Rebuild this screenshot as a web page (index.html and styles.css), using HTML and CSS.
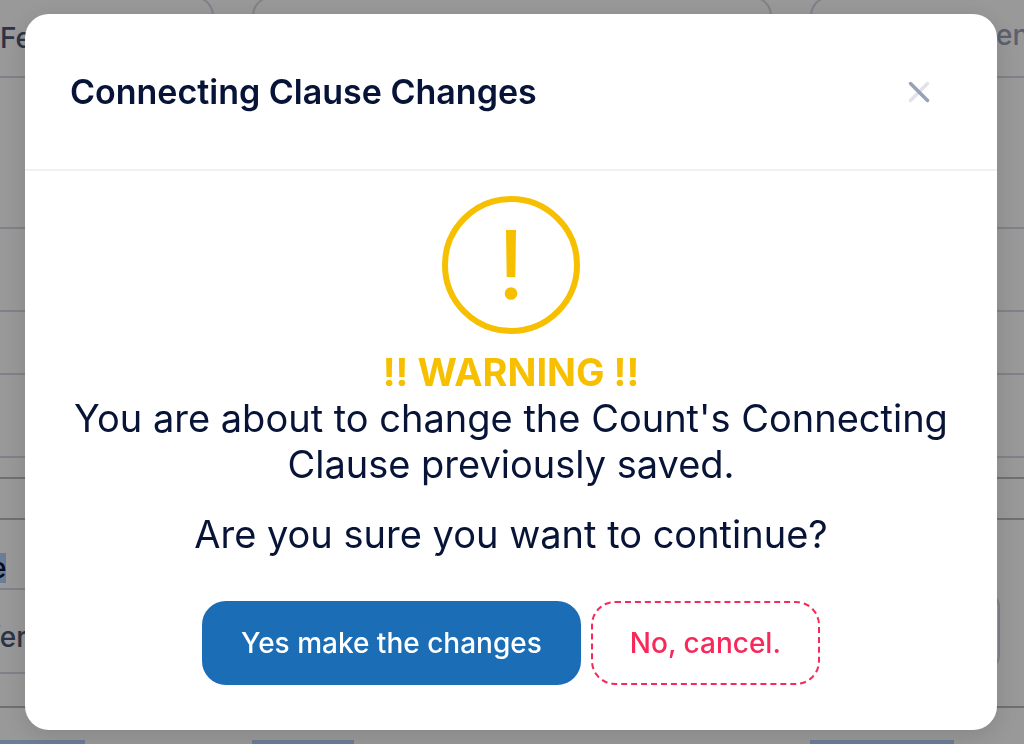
FILE: index.html
```html
<!DOCTYPE html>
<html lang="en">
<head>
    <meta charset="UTF-8">
    <meta name="viewport" content="width=device-width, initial-scale=1.0">
    <title>Connecting Clause Changes</title>
    <link rel="stylesheet" href="styles.css">
</head>
<body>
    <div class="page">
        <div class="fields">
            <div class="field field-first">Fe</div>
            <div class="field"></div>
            <div class="field field-last">en</div>
        </div>
        <div class="row row-tall"></div>
        <div class="row row-medium"></div>
        <div class="row row-small"></div>
        <div class="row row-medium"></div>
        <div class="row row-gap dark"></div>
        <div class="row row-head dark"></div>
        <div class="details dark">
            <div class="details-list">
                <div class="details-row"><mark>e</mark></div>
                <div class="details-row details-row-tall">fer</div>
            </div>
            <div class="details-box"></div>
        </div>
        <div class="selection">
            <div class="selected"></div>
            <div class="selected selected-mid"></div>
            <div class="selected selected-last"></div>
        </div>
    </div>

    <div class="backdrop">
        <div class="modal" role="dialog" aria-modal="true" aria-labelledby="modalTitle">
            <div class="modal-header">
                <h2 id="modalTitle">Connecting Clause Changes</h2>
                <button class="close-btn" type="button" aria-label="Close">
                    <svg width="22" height="22" viewBox="0 0 22 22" fill="none" stroke="#99a1b7" stroke-width="3.500" stroke-linecap="round">
                        <path d="M19.5 2.5L2.5 19.5" opacity="0.3"/>
                        <path d="M2.5 2.5L19.5 19.5"/>
                    </svg>
                </button>
            </div>
            <div class="modal-body">
                <svg class="warning-icon" width="138" height="138" viewBox="0 0 138 138" fill="#f6c000">
                    <circle cx="69" cy="69" r="66" fill="none" stroke="#f6c000" stroke-width="6"/>
                    <path d="M64 34H74L73.300 81H64.700Z"/>
                    <circle cx="69" cy="97.500" r="6.300"/>
                </svg>
                <p><strong>!! WARNING !!</strong><br>You are about to change the Count's Connecting Clause previously saved.</p>
                <p>Are you sure you want to continue?</p>
                <div class="actions">
                    <button class="btn btn-primary" type="button">Yes make the changes</button>
                    <button class="btn btn-cancel" type="button">No, cancel.</button>
                </div>
            </div>
        </div>
    </div>
</body>
</html>
```
FILE: styles.css
```css
* {
    margin: 0;
    padding: 0;
    box-sizing: border-box;
}

body {
    font-family: Inter, "Liberation Sans", sans-serif;
    font-size: 28px;
    color: #071437;
    background: #fff;
    height: 100vh;
    overflow: hidden;
}

/* Form behind the modal */
.page {
    height: 100vh;
    overflow: hidden;
    font-weight: 500;
}

.fields {
    display: grid;
    grid-template-columns: 214px 520px 1fr;
    gap: 38px;
    height: 78px;
    overflow: hidden;
    border-bottom: 2px solid #d5d9e6;
}

.field {
    height: 110px;
    margin-top: -4px;
    border: 2px solid #d5d9e6;
    border-radius: 20px;
    color: #4b5675;
    line-height: 80px;
}

.field-first {
    border-left: none;
    border-radius: 0 20px 20px 0;
}

.field-last {
    padding-left: 184px;
    border-right: none;
    border-radius: 20px 0 0 20px;
    color: #99a1b7;
    line-height: 74px;
}

.row {
    border-bottom: 2px solid #d5d9e6;
}

.row-tall { height: 151px; }
.row-medium { height: 83px; }
.row-small { height: 63px; }
.row-gap { height: 21px; }
.row-head { height: 41px; }

.dark {
    border-bottom: 2px solid #bbb;
}

.details {
    display: flex;
    justify-content: space-between;
    height: 188px;
}

/* scrolled slightly past the left edge */
.details-list {
    width: 50%;
    margin-left: -10px;
}

.details-row {
    height: 70px;
    padding-top: 33px;
    border-bottom: 2px solid #d5d9e6;
    line-height: 30px;
}

.details-row-tall {
    height: 84px;
    padding-top: 32px;
    color: #4b5675;
}

.details-box {
    width: 40%;
    height: 74px;
    margin: 74px 24px 0 0;
    border: 2px solid #d5d9e6;
    border-radius: 12px;
}

mark {
    display: inline-block;
    height: 30px;
    color: inherit;
    background: #b4d0fa;
}

.selection {
    display: grid;
    grid-template-columns: 214px 520px 1fr;
    gap: 38px;
    padding-top: 32px;
}

.selected {
    width: 85px;
    height: 30px;
    background: #b4d0fa;
}

.selected-mid { width: 102px; }
.selected-last { width: 144px; }

/* Modal */
.backdrop {
    position: fixed;
    inset: 0;
    padding: 14px 27px 14px 25px;
    background: rgba(0, 0, 0, 0.4);
}

.modal {
    background: #fff;
    border-radius: 24px;
    box-shadow: 0 6px 28px rgba(0, 0, 0, 0.14);
}

.modal-header {
    display: flex;
    align-items: center;
    justify-content: space-between;
    padding: 56px 67px 56px 45px;
    border-bottom: 2px solid #f1f1f2;
}

.modal-header h2 {
    font-size: 34px;
    font-weight: 600;
    line-height: 43px;
}

.close-btn {
    display: flex;
    border: none;
    background: none;
    cursor: pointer;
}

.modal-body {
    padding: 25px 45px 45px;
    text-align: center;
}

.warning-icon {
    display: block;
    margin: 0 auto 15px;
}

.modal-body p {
    margin-bottom: 24px;
    font-size: 38px;
    line-height: 46px;
}

.modal-body strong {
    font-weight: 700;
    color: #f6c000;
}

.actions {
    display: flex;
    justify-content: center;
    gap: 10px;
    padding-top: 20px;
}

.btn {
    padding: 23px 37px;
    border: 2px solid transparent;
    border-radius: 24px;
    font-family: inherit;
    font-size: 28px;
    font-weight: 500;
    line-height: 34px;
    cursor: pointer;
}

.btn-primary {
    border-color: #1b6db5;
    background: #1b6db5;
    color: #fff;
}

.btn-cancel {
    border: 2px dashed #f8285a;
    background: #fff;
    color: #f8285a;
}
```
